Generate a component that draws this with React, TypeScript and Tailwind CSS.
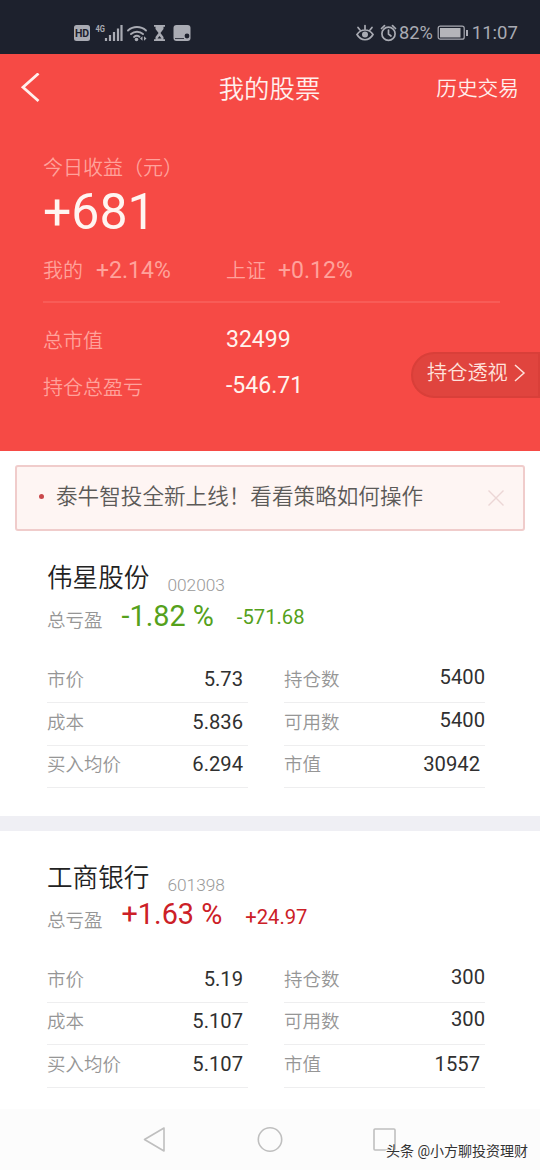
import { clsx } from 'clsx';

interface Cell {
  label: string;
  value: string;
}

interface Stock {
  name: string;
  code: string;
  percent: string;
  amount: string;
  rising: boolean;
  rows: { left: Cell; right: Cell; className: string }[];
}

const stocks: Stock[] = [
  {
    name: '伟星股份',
    code: '002003',
    percent: '-1.82 %',
    amount: '-571.68',
    rising: false,
    rows: [
      { left: { label: '市价', value: '5.73' }, right: { label: '持仓数', value: '5400' }, className: 'h-12' },
      { left: { label: '成本', value: '5.836' }, right: { label: '可用数', value: '5400' }, className: 'h-[43px]' },
      { left: { label: '买入均价', value: '6.294' }, right: { label: '市值', value: '30942' }, className: 'h-[42px]' },
    ],
  },
  {
    name: '工商银行',
    code: '601398',
    percent: '+1.63 %',
    amount: '+24.97',
    rising: true,
    rows: [
      { left: { label: '市价', value: '5.19' }, right: { label: '持仓数', value: '300' }, className: 'h-12' },
      { left: { label: '成本', value: '5.107' }, right: { label: '可用数', value: '300' }, className: 'h-[42px]' },
      { left: { label: '买入均价', value: '5.107' }, right: { label: '市值', value: '1557' }, className: 'h-[43px]' },
    ],
  },
];

const StatusBar = () => (
  <div className="flex h-[54px] items-center bg-[#1d212d] pt-3 text-[#a9abb3]">
    <svg className="ml-[73px] h-[18px] w-[120px]" viewBox="0 0 120 18" fill="none">
      <rect x="1" y="1" width="16" height="16" rx="2.5" fill="#a9abb3" />
      <text x="9" y="13" textAnchor="middle" fontSize="10.5" fontWeight="700" fill="#1d212d" className="font-[Roboto]">HD</text>
      <text x="22.5" y="7.5" fontSize="9.500" fontWeight="700" fill="#a9abb3" className="font-[Roboto]" textLength="9.500" lengthAdjust="spacingAndGlyphs">4G</text>
      <path d="M33 17v-3M37 17v-6M41 17V8M45 17V4.500M48.500 17V1" stroke="#a9abb3" strokeWidth="2.200" />
      <path d="M55 6.500a13.500 13.500 0 0 1 18 0M58 10a9 9 0 0 1 12 0M61 13a4.500 4.500 0 0 1 5.500-.3" stroke="#a9abb3" strokeWidth="1.900" strokeLinecap="round" />
      <circle cx="63.500" cy="15.500" r="1.800" fill="#a9abb3" />
      <path d="M67 14.500l2.500-2.200v4.400zM73.500 14.500L71 12.300v4.400z" fill="#a9abb3" />
      <path d="M81 1.800h11M81 16.200h11" stroke="#a9abb3" strokeWidth="1.800" />
      <path d="M82.500 2h8v3L87.500 9l3 4v3h-8v-3l3-4-3-4z" fill="#a9abb3" />
      <path d="M84.500 14.500l2-2.500 2 2.500z" fill="#1d212d" />
      <rect x="100.500" y="1" width="17" height="16" rx="3" fill="#a9abb3" />
      <circle cx="114" cy="12" r="2.400" fill="#1d212d" />
      <path d="M102 14.500h9" stroke="#1d212d" strokeWidth=".8" />
    </svg>
    <svg className="ml-[163px] h-[18px] w-[43px]" viewBox="0 0 43 18" fill="none" stroke="#a9abb3" strokeWidth="1.700" strokeLinecap="round">
      <path d="M1 10.500C5 4.500 13 4.500 17 10.500 13 17.500 5 17.500 1 10.500zM9 5V1.500M4 6L2 3.500M14 6l2-2.500" />
      <circle cx="9" cy="10.500" r="3" fill="#a9abb3" stroke="none" />
      <circle cx="32.500" cy="9.800" r="6.600" />
      <path d="M32.500 6v4l2.500 2M25.500 4.500l3-2.800M39.500 4.500l-3-2.800" />
    </svg>
    <span className="text-[18.200px] leading-5">82%</span>
    <svg className="ml-1 h-4 w-8" viewBox="0 0 32 16" fill="none">
      <rect x="1.200" y="1.200" width="26" height="13" rx="2" stroke="#a9abb3" strokeWidth="1.200" />
      <rect x="3" y="3" width="20.500" height="9.500" fill="#b4b5ba" />
      <path d="M30 5v6" stroke="#a9abb3" strokeWidth="2" />
    </svg>
    <span className="ml-[3px] text-[18.500px] leading-5">11:07</span>
  </div>
);

const Summary = () => (
  <section className="relative h-[397px] bg-[#f64a45] text-white">
    <header className="grid h-[68px] grid-cols-[1fr_auto_1fr] items-center pr-[21px] pl-5">
      <svg className="h-[30px] w-5" viewBox="0 0 20 30" fill="none" stroke="#fff0ed" strokeWidth="2.800">
        <path d="M18.500 .5L3 14.200 18.500 28" />
      </svg>
      <h1 className="pt-px text-[25.400px] leading-8 font-[350] text-[#ffefec]">我的股票</h1>
      <button className="justify-self-end pt-px text-[20.700px] leading-8 font-[350] text-[#ffefec]">历史交易</button>
    </header>

    <div className="px-[43px] pt-[34px]">
      <p className="text-[20px] leading-6 font-[350] text-[#ffa29b]">今日收益（元）</p>
      <p className="mt-[5px] text-[50px] leading-[54px] text-[#fff5f1]">+681</p>

      <div className="mt-4 flex h-8 items-center text-[#ffa29b]">
        <div className="flex w-[183px] items-center gap-[13px]">
          <span className="text-[20px] font-[350]">我的</span>
          <span className="text-[23px]">+2.14%</span>
        </div>
        <div className="flex items-center gap-3">
          <span className="text-[20px] font-[350]">上证</span>
          <span className="text-[23px]">+0.12%</span>
        </div>
      </div>
      <hr className="mt-[14px] mr-[-3px] border-t-2 border-[#f85c57]" />

      <div className="mt-5 flex h-9 items-center">
        <span className="w-[183px] text-[20px] font-[350] text-[#ffa29b]">总市值</span>
        <span className="pb-0.5 text-[23px] text-[#fff3ed]">32499</span>
      </div>
      <div className="mt-[11px] flex h-9 items-center">
        <span className="w-[183px] text-[20px] font-[350] text-[#ffa29b]">持仓总盈亏</span>
        <span className="pb-[3px] text-[23px] text-[#fff3ed]">-546.71</span>
      </div>
    </div>

    {/* pinned to the right edge of the panel */}
    <button className="absolute top-[298px] right-0 flex h-[46px] w-[129px] items-center rounded-l-full border-2 border-[#d93f39] bg-[#e0443e] pb-[4px] pl-[14px]">
      <span className="text-[20.200px] leading-6 font-[350] text-[#ffe1dc]">持仓透视</span>
      <svg className="ml-1.5 h-[18px] w-3" viewBox="0 0 12 18" fill="none" stroke="#ffe1dc" strokeWidth="1.500">
        <path d="M1 1l9 8-9 8" />
      </svg>
    </button>
  </section>
);

const Notice = () => (
  <div className="mx-[15px] mt-[14px] flex h-[66px] items-center rounded-[3px] border-2 border-[#f0cccb] bg-[#fef5f3] pr-[19px] pl-[22px]">
    <span className="mb-1 h-[5px] w-[5px] rounded-full bg-[#c9484b]" />
    <p className="mb-[3px] ml-3 text-[21.600px] leading-8 font-[350] text-[#5c5a58]">泰牛智投全新上线！看看策略如何操作</p>
    <svg className="ml-auto h-4 w-4" viewBox="0 0 16 16" fill="none" stroke="#ecd6d5" strokeWidth="1.400">
      <path d="M.5.500l15 15M15.500.500l-15 15" />
    </svg>
  </div>
);

const StockCell = ({ label, value, wide }: Cell & { wide?: boolean }) => (
  <div className="flex h-full items-end justify-between border-b border-[#eeeeef] pb-[9px]">
    <span className="text-[18.500px] leading-[26px] font-[350] text-[#969696]">{label}</span>
    <span className={clsx('text-[20.200px] leading-[26px] text-[#303030]', wide ? 'mb-[3px]' : 'mb-px pr-[5px]')}>{value}</span>
  </div>
);

const StockCard = ({ stock }: { stock: Stock }) => (
  <section className="bg-white pr-[55px] pl-[47px]">
    <div className="flex h-[66px] items-start pt-[27px]">
      <h2 className="text-[25.600px] leading-10 font-[350] text-[#222]">{stock.name}</h2>
      <span className="mt-[17px] ml-[18px] text-[17.300px] leading-5 font-light text-[#999]">{stock.code}</span>
    </div>
    <div className={clsx('flex h-10 items-start', stock.rising ? 'text-[#cc2027]' : 'text-[#55a11c]')}>
      <span className="mt-1 text-[18.500px] leading-10 font-[350] text-[#969696]">总亏盈</span>
      <span className={clsx('ml-[19px] text-[28.800px] leading-10', stock.rising ? '-mt-[3px]' : '-mt-px')}>{stock.percent}</span>
      <span className="ml-[23px] text-[20.200px] leading-10">{stock.amount}</span>
    </div>
    <div className="mt-[18px]">
      {stock.rows.map((row, i) => (
        <div key={row.left.label} className={clsx('grid grid-cols-[201px_201px] gap-9', row.className)}>
          <StockCell {...row.left} />
          <StockCell {...row.right} wide={i < 2} />
        </div>
      ))}
    </div>
  </section>
);

const NavBar = () => (
  <nav className="relative mt-auto h-[61px] bg-[#fcfcfc]">
    <svg className="mx-auto h-full w-[260px]" viewBox="0 0 260 61" fill="none" stroke="#bfbfbf" strokeWidth="1.600" strokeLinejoin="round">
      <path d="M24 19v23L4.500 30.500z" />
      <circle cx="130" cy="30.500" r="11.700" />
      <rect x="234" y="20" width="21" height="21" rx="1" />
    </svg>
    <span className="absolute right-3 bottom-[7px] text-[14px] leading-6 whitespace-nowrap text-[#333] [text-shadow:-1px_-1px_0_#fff]">头条 @小方聊投资理财</span>
  </nav>
);

export default function App() {
  return (
    <div className="flex h-[1170px] w-[540px] flex-col overflow-hidden bg-white font-[Roboto,'Noto_Sans_CJK_SC',sans-serif]">
      <StatusBar />
      <Summary />
      <Notice />
      <div className="h-[285px]">
        <StockCard stock={stocks[0]} />
      </div>
      <div className="h-[15px] bg-[#efeff4]" />
      <StockCard stock={stocks[1]} />
      <NavBar />
    </div>
  );
}
